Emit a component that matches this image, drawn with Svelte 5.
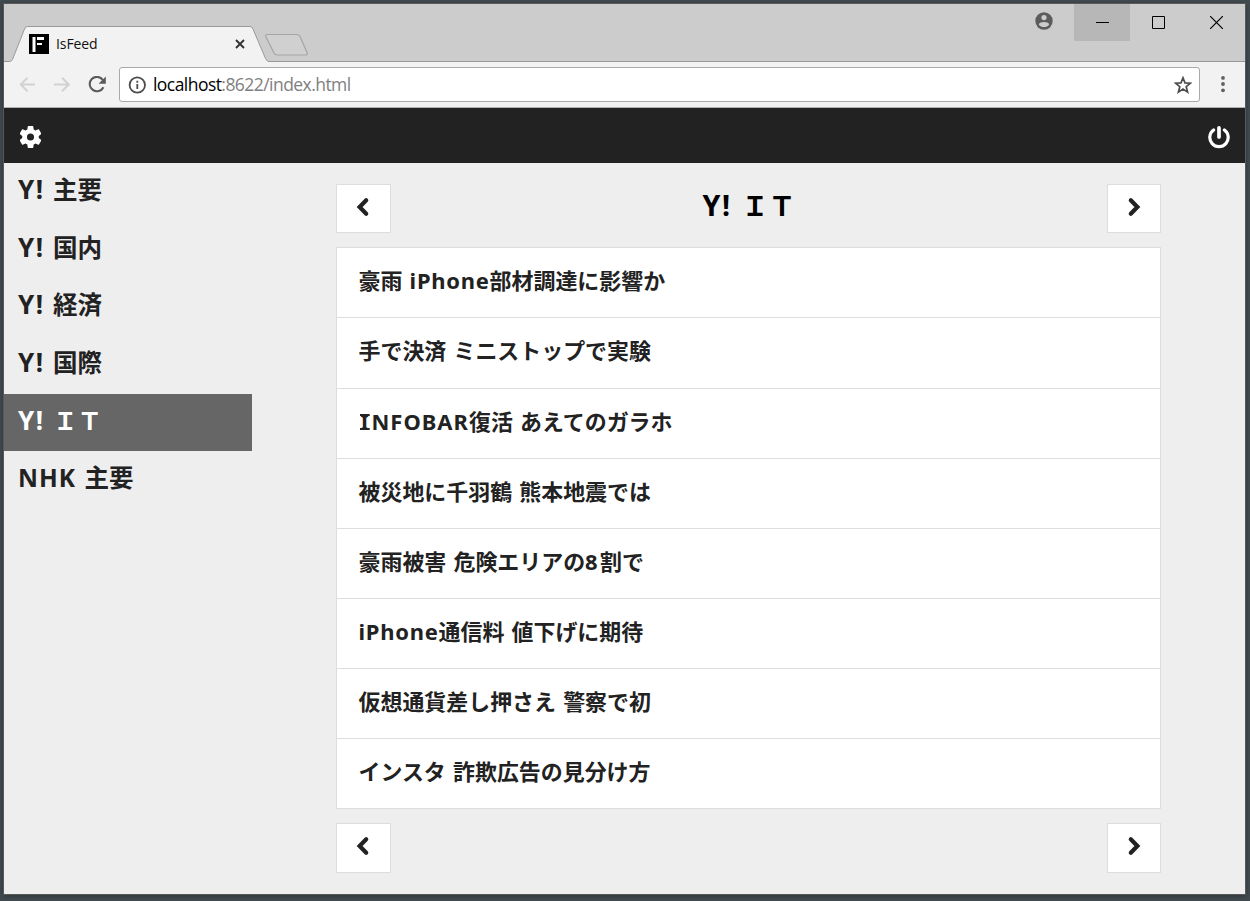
<script>
  const feeds = [
    { latin: 'Y!', name: '主要' },
    { latin: 'Y!', name: '国内' },
    { latin: 'Y!', name: '経済' },
    { latin: 'Y!', name: '国際' },
    { latin: 'Y!', name: 'ＩＴ', active: true },
    { latin: 'NHK', name: '主要' }
  ];
  const articles = [
    ['豪雨 ', 'iPhone', '部材調達に影響か'],
    ['手で決済 ミニストップで実験'],
    ['', 'INFOBAR', '復活 あえてのガラホ'],
    ['被災地に千羽鶴 熊本地震では'],
    ['豪雨被害 危険エリアの', '8', '割で'],
    ['', 'iPhone', '通信料 値下げに期待'],
    ['仮想通貨差し押さえ 警察で初'],
    ['インスタ 詐欺広告の見分け方']
  ];
</script>

{#snippet feedName(feed)}
  <span class="latin" class:wide={feed.latin === 'Y!'}>{feed.latin}</span><span class="name">{#if feed.name === 'ＩＴ'}<span class="serif">Ｉ</span>Ｔ{:else}{feed.name}{/if}</span>
{/snippet}

{#snippet pager()}
  <button class="page prev" aria-label="前へ">
    <svg width="14" height="20" viewBox="0 0 14 20"><path d="M10.200 3.200 3.600 10l6.600 6.800" /></svg>
  </button>
{/snippet}

{#snippet pagerNext()}
  <button class="page next" aria-label="次へ">
    <svg width="14" height="20" viewBox="0 0 14 20"><path d="m3.800 3.200 6.600 6.800-6.600 6.800" /></svg>
  </button>
{/snippet}

<div class="desktop">
  <div class="window">
    <div class="titlebar">
      <svg class="tabs" width="320" height="58" viewBox="0 0 320 58">
        <path d="M0 58v-.5h5.500q2 0 3-2L20.500 25q1-2.500 3-2.500H246q2 0 3 2.500L261.500 54.500q1.500 3 3.500 3h55v.5z" fill="#f2f2f2" />
        <path d="M0 57.500h5.500q2 0 3-2L20.500 25q1-2.500 3-2.500H246q2 0 3 2.500L261.500 54.500q1.500 3 3.500 3h55" fill="none" stroke="#999" />
        <path d="M263 30.500h29.500q2.500 0 3.500 2l7 16q1 2.500-1.500 2.500h-28q-2.500 0-3.500-2l-8-16q-1-2.500 1-2.500z" fill="#d0d0d0" stroke="#a5a5a5" stroke-width="1.200" />
      </svg>
      <div class="tab">
        <svg width="20" height="20" viewBox="0 0 20 20"><path d="M0 0h20v20H0z" /><path d="M3.500 3H6.500v15H3.500zM8 3h7v3H8zM8 9h5v2H8z" fill="#fff" /></svg>
        <span class="tab-title">IsFeed</span>
        <svg width="10" height="10" viewBox="0 0 10 10"><path d="m1 1 8 8M9 1 1 9" stroke="#333" stroke-width="1.900" /></svg>
      </div>
      <div class="controls">
        <div class="user">
          <svg width="18" height="18" viewBox="0 0 18 18"><circle cx="9" cy="9" r="8.700" fill="#5c5c5c" /><circle cx="9" cy="5.600" r="2.600" fill="#ccc" /><path d="M3.800 12.400C4.800 9.200 13.200 9.200 14.200 12.400 11.700 16 6.300 16 3.800 12.400z" fill="#ccc" /></svg>
        </div>
        <div class="ctl hover"><svg width="13" height="13" viewBox="0 0 13 13"><path d="M0 6.500h13" stroke="#000" /></svg></div>
        <div class="ctl"><svg width="13" height="13" viewBox="0 0 13 13"><path d="M.5.5h12v12H.5z" fill="none" stroke="#000" /></svg></div>
        <div class="ctl close"><svg width="13" height="13" viewBox="0 0 13 13"><path d="m0 0 13 13M13 0 0 13" stroke="#000" stroke-width="1.200" /></svg></div>
      </div>
    </div>

    <div class="toolbar">
      <svg class="back" width="17" height="16" viewBox="0 0 17 16"><path d="M16 7.500H1.500M8.500.7 1.700 7.500l6.800 6.800" fill="none" stroke="#d2d2d2" stroke-width="2" /></svg>
      <svg class="fwd" width="17" height="16" viewBox="0 0 17 16"><path d="M0 7.500h15M8 .7l6.800 6.800L8 14.300" fill="none" stroke="#d2d2d2" stroke-width="2" /></svg>
      <svg class="reload" width="18" height="18" viewBox="0 0 18 18"><path d="M15.400 11.200A7.200 7.200 0 1 1 14.700 3.800" fill="none" stroke="#5a5a5a" stroke-width="2.100" /><path d="M17.800.5v7.200h-7.200z" fill="#5a5a5a" /></svg>
      <div class="address">
        <svg width="18" height="18" viewBox="0 0 18 18"><circle cx="9.300" cy="9" r="7.700" fill="none" stroke="#4c4c4c" stroke-width="1.800" /><path d="M8.400 8h1.800v5H8.400zM8.400 4.800h1.800v1.900H8.400z" fill="#4c4c4c" /></svg>
        <span class="url">localhost<span>:8622/index.html</span></span>
        <svg class="star" width="18" height="18" viewBox="0 0 18 18"><path d="m9 1.800 2 5.100 5.400.3-4.200 3.500 1.400 5.400L9 13.100l-4.600 3 1.400-5.400L1.600 7.200 7 6.900z" fill="none" stroke="#4d4d4d" stroke-width="1.700" /></svg>
      </div>
      <svg class="more" width="4" height="17" viewBox="0 0 4 17"><g fill="#606060"><circle cx="2" cy="1.900" r="1.900" /><circle cx="2" cy="8" r="1.900" /><circle cx="2" cy="14.300" r="1.900" /></g></svg>
    </div>

    <header>
      <svg class="gear" width="21" height="22" viewBox="2.500 2 19 20" preserveAspectRatio="none"><path fill="#fff" d="M19.430 12.980c.04-.32.07-.64.07-.98s-.03-.66-.07-.98l2.110-1.650c.19-.15.24-.42.12-.64l-2-3.460c-.12-.22-.39-.3-.61-.22l-2.490 1c-.52-.4-1.080-.73-1.690-.98l-.38-2.650C14.460 2.180 14.250 2 14 2h-4c-.25 0-.46.18-.49.42l-.38 2.650c-.61.25-1.170.59-1.690.98l-2.490-1c-.23-.09-.49 0-.61.22l-2 3.460c-.13.22-.07.49.12.64l2.110 1.650c-.04.32-.07.65-.07.98s.03.66.07.98l-2.110 1.650c-.19.15-.24.42-.12.64l2 3.460c.12.22.39.3.61.22l2.490-1c.52.4 1.080.73 1.690.98l.38 2.650c.03.24.24.42.49.42h4c.25 0 .46-.18.49-.42l.38-2.650c.61-.25 1.170-.59 1.690-.98l2.490 1c.23.09.49 0 .61-.22l2-3.460c.12-.22.07-.49-.12-.64zM12 15.200a3.200 3.200 0 1 1 0-6.400 3.200 3.200 0 0 1 0 6.400z" /></svg>
      <svg width="22" height="23" viewBox="0 0 22 23"><g fill="none" stroke="#fff" stroke-linecap="round"><path d="M5.600 4a9.200 9.200 0 1 0 10.800 0" stroke-width="3.200" /><path d="M11 1.900v9" stroke-width="3.700" /></g></svg>
    </header>

    <div class="content">
      <nav>
        {#each feeds as feed}
          <div class="feed" class:active={feed.active}>{@render feedName(feed)}</div>
        {/each}
      </nav>
      <main>
        <div class="bar">
          {@render pager()}
          <h1>{@render feedName(feeds[4])}</h1>
          {@render pagerNext()}
        </div>
        <div class="list">
          {#each articles as [before, latin, after]}
            <div class="article">{before}{#if latin === 'INFOBAR'}<span class="word info"><span class="serif">I</span>NFOBAR</span>{:else if latin}<span class="word" class:digit={latin === '8'}>{latin}</span>{/if}{after ?? ''}</div>
          {/each}
        </div>
        <div class="bar bottom">
          {@render pager()}
          {@render pagerNext()}
        </div>
      </main>
    </div>
  </div>
</div>

<style>
  :global(body) { margin: 0; }
  .desktop {
    box-sizing: border-box;
    width: 1250px;
    height: 901px;
    padding: 3px 4px 6px 3px;
    background: #424c50;
    overflow: hidden;
    font-family: "Noto Sans", "Noto Sans CJK JP", sans-serif;
  }
  .window {
    box-sizing: border-box;
    width: 1243px;
    height: 892px;
    border: 1px solid #595959;
    display: flex;
    flex-direction: column;
    background: #eee;
    box-shadow: 0 1px 5px rgba(0, 0, 0, .35);
  }
  svg { display: block; flex: none; }
  .titlebar {
    position: relative;
    height: 58px;
    flex: none;
    background: linear-gradient(#999, #999) bottom / 100% 1px no-repeat #ccc;
    display: flex;
    justify-content: space-between;
  }
  .tabs { position: absolute; left: 0; top: 0; }
  .tab {
    position: relative;
    display: flex;
    align-items: center;
    width: 216px;
    height: 20px;
    margin: 30px 0 0 25px;
  }
  .tab-title {
    flex: 1;
    padding-left: 7px;
    font: 14px/20px "Open Sans", sans-serif;
    letter-spacing: -.1px;
    color: #111;
  }
  .controls { display: flex; height: 37px; }
  .user { width: 39px; padding-top: 8px; }
  .ctl { box-sizing: border-box; width: 56px; display: flex; align-items: center; justify-content: center; }
  .ctl.close { width: 59px; padding-left: 2px; }
  .ctl.hover { background: #b7b7b7; }
  .toolbar {
    box-sizing: border-box;
    height: 46px;
    flex: none;
    display: flex;
    align-items: center;
    background: #f2f2f2;
    border-bottom: 1px solid #b0b0b0;
  }
  .back { margin-left: 15px; }
  .fwd { margin-left: 18px; }
  .reload { margin-left: 17px; }
  .address {
    box-sizing: border-box;
    width: 1081px;
    height: 35px;
    margin-left: 13px;
    padding: 1px 7px 0 8px;
    display: flex;
    align-items: center;
    background: #fff;
    border: 1px solid #a9a9a9;
    border-radius: 3px;
  }
  .url { flex: 1; padding: 0 0 2px 7px; font: 17.500px/24px "Open Sans", sans-serif; letter-spacing: -.55px; color: #000; }
  .url span { color: #808080; }
  .more { margin-left: 21px; }
  header {
    box-sizing: border-box;
    height: 55px;
    flex: none;
    padding: 3px 15px 0 15.500px;
    display: flex;
    justify-content: space-between;
    align-items: center;
    background: #222;
  }
  .content { flex: 1; display: flex; min-height: 0; }
  nav { width: 248px; flex: none; }
  .feed {
    box-sizing: border-box;
    height: 57.700px;
    padding-left: 14px;
    font-size: 24.500px;
    font-weight: 700;
    line-height: 54px;
    color: #222;
    white-space: nowrap;
  }
  .feed.active { background: #666; color: #fff; }
  .latin { letter-spacing: 1.100px; }
  .latin.wide { font-size: 1.060em; line-height: 1; letter-spacing: 1.500px; }
  .name { margin-left: 8.300px; }
  main { width: 825px; margin-left: 84px; padding-top: 21px; }
  .bar { display: flex; justify-content: space-between; height: 49px; margin-bottom: 14.250px; }
  .bottom { margin: 14px 0 0; height: 50px; }
  h1 { margin: 0; font-size: 27px; line-height: 44px; color: #000; white-space: nowrap; }
  h1 .name { margin-left: 10px; }
  .page {
    box-sizing: border-box;
    width: 55px;
    padding: 0 0 4px;
    border: 1px solid #ddd;
    background: #fff;
    display: flex;
    align-items: center;
    justify-content: center;
  }
  .page.prev { padding-right: 2px; }
  .page.next { width: 54px; }
  .page path { fill: none; stroke: #222; stroke-width: 4.200; stroke-linecap: round; }
  .list { border: 1px solid #ddd; border-top: 0; background: #fff; }
  .article {
    box-sizing: border-box;
    height: 70.150px;
    border-top: 1px solid #ddd;
    padding-left: 21.500px;
    font-size: 21.950px;
    font-weight: 700;
    line-height: 65px;
    word-spacing: 1.500px;
    color: #222;
    white-space: nowrap;
  }
  .word { letter-spacing: .75px; }
  .word.info { letter-spacing: 1px; }
  .word.digit { letter-spacing: 2.300px; }
  .serif {
    background:
      linear-gradient(currentColor, currentColor) center 0 / .44em .1em no-repeat,
      linear-gradient(currentColor, currentColor) center 100% / .44em .1em no-repeat;
    display: inline-block;
    height: .74em;
    line-height: .74em;
  }
  .info .serif { width: .56em; text-align: center; letter-spacing: 0; margin-right: .75px; }
</style>
